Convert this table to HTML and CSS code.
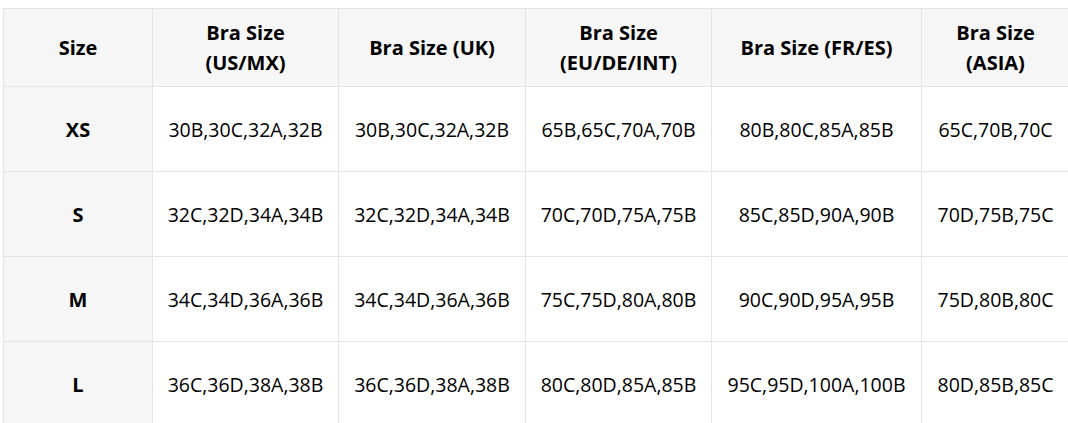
FILE: index.html
```html
<!DOCTYPE html>
<html lang="en">
<head>
<meta charset="utf-8">
<title>Size Chart</title>
<link rel="stylesheet" href="styles.css">
</head>
<body>
<table class="size-table">
  <colgroup>
    <col class="c1"><col class="c2"><col class="c3"><col class="c4"><col class="c5"><col class="c6">
  </colgroup>
  <thead>
    <tr>
      <th>Size</th>
      <th>Bra Size<br>(US/MX)</th>
      <th>Bra Size (UK)</th>
      <th>Bra Size<br>(EU/DE/INT)</th>
      <th>Bra Size (FR/ES)</th>
      <th>Bra Size<br>(ASIA)</th>
    </tr>
  </thead>
  <tbody>
    <tr><th>XS</th><td>30B,30C,32A,32B</td><td>30B,30C,32A,32B</td><td>65B,65C,70A,70B</td><td>80B,80C,85A,85B</td><td>65C,70B,70C</td></tr>
    <tr><th>S</th><td>32C,32D,34A,34B</td><td>32C,32D,34A,34B</td><td>70C,70D,75A,75B</td><td>85C,85D,90A,90B</td><td>70D,75B,75C</td></tr>
    <tr><th>M</th><td>34C,34D,36A,36B</td><td>34C,34D,36A,36B</td><td>75C,75D,80A,80B</td><td>90C,90D,95A,95B</td><td>75D,80B,80C</td></tr>
    <tr><th>L</th><td>36C,36D,38A,38B</td><td>36C,36D,38A,38B</td><td>80C,80D,85A,85B</td><td>95C,95D,100A,100B</td><td>80D,85B,85C</td></tr>
  </tbody>
</table>
</body>
</html>
```

FILE: styles.css
```css
html, body {
  margin: 0;
  padding: 0;
  background: #ffffff;
  overflow: hidden;
}
body {
  padding: 8px 0 0 3px;
  font-family: "Open Sans", "Liberation Sans", sans-serif;
  color: #000000;
}
.size-table {
  border-collapse: collapse;
  table-layout: fixed;
  width: 1066px;
}
.c1 { width: 149px; }
.c2 { width: 186px; }
.c3 { width: 187px; }
.c4 { width: 186px; }
.c5 { width: 210px; }
.c6 { width: 148px; }
.size-table th,
.size-table td {
  border: 1px solid #e4e4e4;
  text-align: center;
  vertical-align: middle;
  padding: 0 2px;
}
.size-table thead th {
  background: #f6f6f6;
  font-weight: 700;
  font-size: 20px;
  line-height: 30px;
  height: 77px;
}
.size-table tbody th {
  background: #f6f6f6;
  font-weight: 700;
  font-size: 20px;
}
.size-table tbody td {
  font-size: 19.5px;
  font-weight: 400;
}
.size-table tbody tr {
  height: 85px;
}
```
